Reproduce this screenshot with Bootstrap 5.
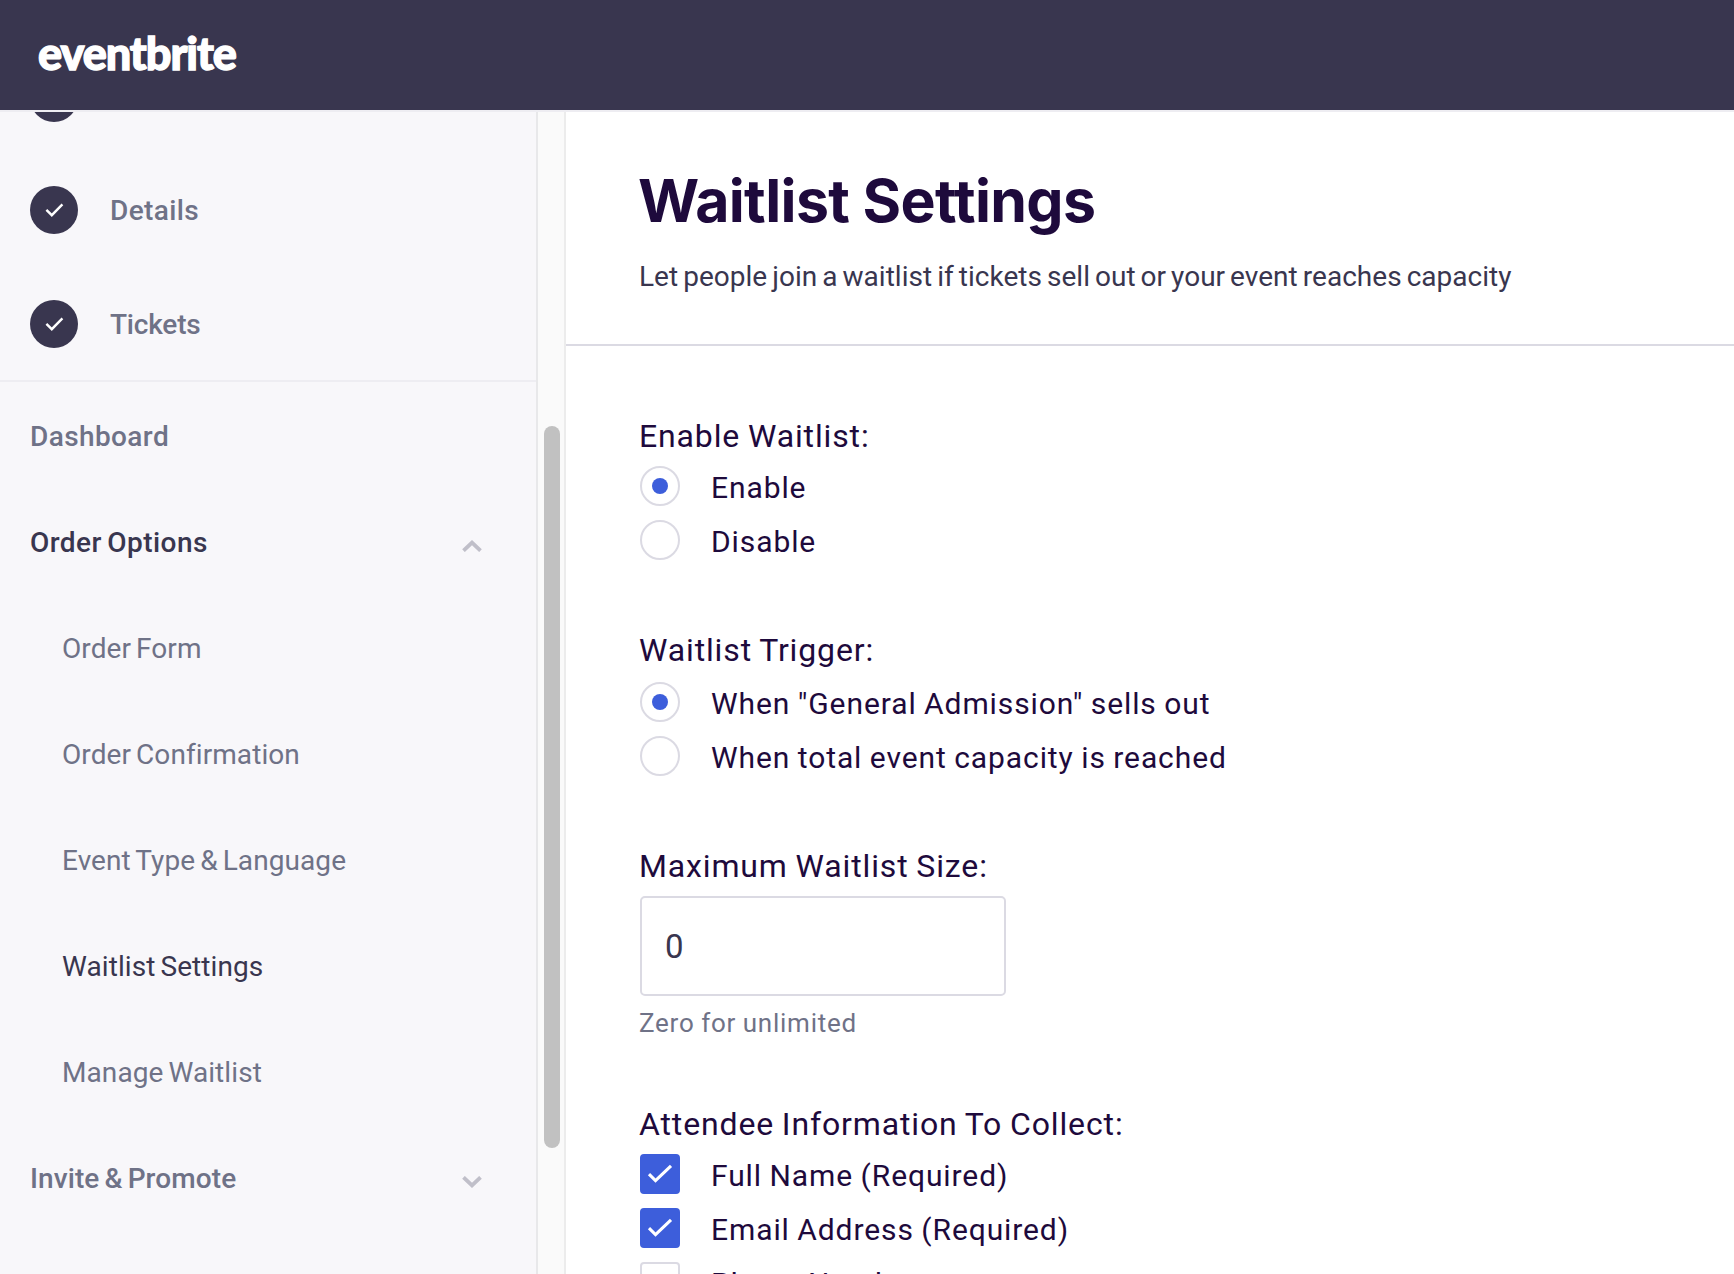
<!DOCTYPE html>
<html lang="en">
<head>
<meta charset="utf-8">
<meta name="viewport" content="width=device-width, initial-scale=1">
<title>Waitlist Settings</title>
<link href="https://cdn.jsdelivr.net/npm/bootstrap@5.3.0/dist/css/bootstrap.min.css" rel="stylesheet">
<style>
  :root { --ink: #1e0a3c; --slate: #39364f; --muted: #6f7287; --line: #dbdae3; --blue: #3d5edb; }
  body { font-family: Roboto, "Liberation Sans", sans-serif; color: var(--ink); background: #fff; }
  .topbar { height: 112px; background: #39364f; border-bottom: 2px solid #eeedf2; padding: 0 0 5px 38px; }
  .brand-name { font: 900 45px/60px Lato, sans-serif; letter-spacing: -1.05px; color: #fff; -webkit-text-stroke: 1.3px #fff; }

  .sidenav { width: 538px; background: #f8f7fa; border-right: 2px solid #e8e8ea; font-size: 28px; line-height: 40px; color: var(--muted); }
  .step { height: 114px; padding-left: 30px; gap: 32px; font-weight: 500; flex: none; }
  .step-first { height: 110px; margin-top: -69px; }
  .step-dot { width: 48px; height: 48px; border-radius: 50%; background: #39364f; }
  .step-name { padding-top: 2px; }
  .menu { margin-top: -1px; border-top: 2px solid #eeedf2; padding-top: 1px; }
  .menu a { height: 106px; padding: 2px 54px 0 30px; color: var(--muted); text-decoration: none; white-space: nowrap; word-spacing: -2px; }
  .menu .top-item { font-weight: 500; letter-spacing: .1px; }
  .menu .sub-item { padding-left: 62px; letter-spacing: .08px; }
  .menu .is-current { color: var(--slate); }
  .menu .open-item { letter-spacing: .45px; }
  .menu .dash-item { letter-spacing: .4px; }
  .menu svg { margin-top: 6px; }
  .sp-4 { letter-spacing: .4px; }
  .sp-n2 { letter-spacing: -.2px; }

  .track { width: 28px; background: #fafafa; border-right: 2px solid #ececec; padding: 314px 4px 0 6px; }
  .thumb { width: 16px; height: 722px; border-radius: 8px; background: #c1c1c1; }

  .page-head { padding: 57px 0 47px 73px; border-bottom: 2px solid var(--line); }
  .page-head h1 { font: 700 59px/64px Inter, sans-serif; letter-spacing: -.65px; margin: 0 0 24px -1px; }
  .page-head p { font-size: 28px; line-height: 40px; letter-spacing: .03px; word-spacing: -2px; color: var(--slate); }

  .settings { padding: 70px 0 0 74px; }
  .field-group { margin-bottom: 63px; }
  .field-title { display: block; font-size: 32px; line-height: 40px; letter-spacing: .86px; word-spacing: -1px; margin: 0 0 3px -1px; }
  .trigger .field-title { margin-bottom: 5px; }
  .choice { height: 54px; gap: 31px; font-size: 30px; line-height: 40px; letter-spacing: .9px; word-spacing: -.8px; white-space: nowrap; }
  .choice label { padding-top: 4px; }
  .choice .form-check-input { width: 40px; height: 40px; margin: 0; border: 2px solid var(--line); flex: none; background-origin: border-box; background-size: 40px 40px; background-position: center; }
  .choice .form-check-input[type=checkbox] { border-radius: 4px; }
  .choice .form-check-input[type=radio]:checked { background-color: #fff; border-color: var(--line);
    background-image: url("data:image/svg+xml,%3Csvg xmlns='http://www.w3.org/2000/svg' viewBox='0 0 40 40'%3E%3Ccircle cx='20' cy='20' r='8' fill='%233d5edb'/%3E%3C/svg%3E"); }
  .choice .form-check-input[type=checkbox]:checked { background-color: var(--blue); border-color: var(--blue);
    background-image: url("data:image/svg+xml,%3Csvg xmlns='http://www.w3.org/2000/svg' viewBox='0 0 40 40'%3E%3Cpath d='M9 20.2 15.5 26.5 31 11.8' fill='none' stroke='%23fff' stroke-width='3.1'/%3E%3C/svg%3E"); }
  .size-field { width: 366px; height: 100px; border: 2px solid var(--line); border-radius: 5px; padding: 0 23px; font-size: 33px; color: var(--slate); margin-top: 10px; }
  .size-help { font-size: 26px; line-height: 36px; letter-spacing: .76px; word-spacing: -.6px; color: var(--muted); margin: 9px 0 0 -1px; }
</style>
</head>
<body class="vh-100 overflow-hidden d-flex flex-column">
  <header class="topbar d-flex align-items-center flex-shrink-0">
    <span class="brand-name">eventbrite</span>
  </header>
  <div class="d-flex flex-grow-1 overflow-hidden">
    <nav class="sidenav d-flex flex-column flex-shrink-0 overflow-hidden">
      <div class="step step-first d-flex align-items-center"><span class="step-dot"></span></div>
      <div class="step d-flex align-items-center">
        <span class="step-dot"><svg width="48" height="48" class="d-block" fill="none" stroke="#fff" stroke-width="2.4"><path d="M16.4 23.8 21.8 29.2 32.4 18.4"/></svg></span>
        <span class="step-name sp-4">Details</span>
      </div>
      <div class="step d-flex align-items-center">
        <span class="step-dot"><svg width="48" height="48" class="d-block" fill="none" stroke="#fff" stroke-width="2.4"><path d="M16.4 23.8 21.8 29.2 32.4 18.4"/></svg></span>
        <span class="step-name sp-n2">Tickets</span>
      </div>
      <div class="menu d-flex flex-column">
        <a href="#" class="top-item dash-item d-flex align-items-center flex-shrink-0">Dashboard</a>
        <a href="#" class="top-item is-current open-item d-flex align-items-center justify-content-between flex-shrink-0">Order Options
          <svg width="20" height="12" fill="none" stroke="#c0bfc9" stroke-width="3.8"><path d="M1.5 10.7 10 2.6 18.5 10.7"/></svg></a>
        <a href="#" class="sub-item d-flex align-items-center flex-shrink-0">Order Form</a>
        <a href="#" class="sub-item d-flex align-items-center flex-shrink-0">Order Confirmation</a>
        <a href="#" class="sub-item d-flex align-items-center flex-shrink-0">Event Type &amp; Language</a>
        <a href="#" class="sub-item is-current d-flex align-items-center flex-shrink-0">Waitlist Settings</a>
        <a href="#" class="sub-item d-flex align-items-center flex-shrink-0">Manage Waitlist</a>
        <a href="#" class="top-item d-flex align-items-center justify-content-between flex-shrink-0">Invite &amp; Promote
          <svg width="20" height="12" fill="none" stroke="#c0bfc9" stroke-width="3.8"><path d="M1.5 1.3 10 9.4 18.5 1.3"/></svg></a>
      </div>
    </nav>
    <div class="track flex-shrink-0"><div class="thumb"></div></div>
    <main class="flex-grow-1 overflow-hidden">
      <div class="page-head">
        <h1>Waitlist Settings</h1>
        <p class="mb-0">Let people join a waitlist if tickets sell out or your event reaches capacity</p>
      </div>
      <form class="settings">
        <div class="field-group">
          <span class="field-title">Enable Waitlist:</span>
          <div class="choice d-flex align-items-center"><input class="form-check-input" type="radio" name="enable" id="on" checked><label for="on">Enable</label></div>
          <div class="choice d-flex align-items-center"><input class="form-check-input" type="radio" name="enable" id="off"><label for="off">Disable</label></div>
        </div>
        <div class="field-group trigger">
          <span class="field-title">Waitlist Trigger:</span>
          <div class="choice d-flex align-items-center"><input class="form-check-input" type="radio" name="trigger" id="ga" checked><label for="ga">When "General Admission" sells out</label></div>
          <div class="choice d-flex align-items-center"><input class="form-check-input" type="radio" name="trigger" id="cap"><label for="cap">When total event capacity is reached</label></div>
        </div>
        <div class="field-group">
          <label class="field-title" for="size">Maximum Waitlist Size:</label>
          <input class="form-control size-field" id="size" type="text" value="0">
          <p class="size-help">Zero for unlimited</p>
        </div>
        <div class="field-group">
          <span class="field-title">Attendee Information To Collect:</span>
          <div class="choice d-flex align-items-center"><input class="form-check-input" type="checkbox" id="name" checked><label for="name">Full Name (Required)</label></div>
          <div class="choice d-flex align-items-center"><input class="form-check-input" type="checkbox" id="mail" checked><label for="mail">Email Address (Required)</label></div>
          <div class="choice d-flex align-items-center"><input class="form-check-input" type="checkbox" id="phone"><label for="phone">Phone Number</label></div>
        </div>
      </form>
    </main>
  </div>
  <script src="https://cdn.jsdelivr.net/npm/bootstrap@5.3.0/dist/js/bootstrap.bundle.min.js"></script>
</body>
</html>
